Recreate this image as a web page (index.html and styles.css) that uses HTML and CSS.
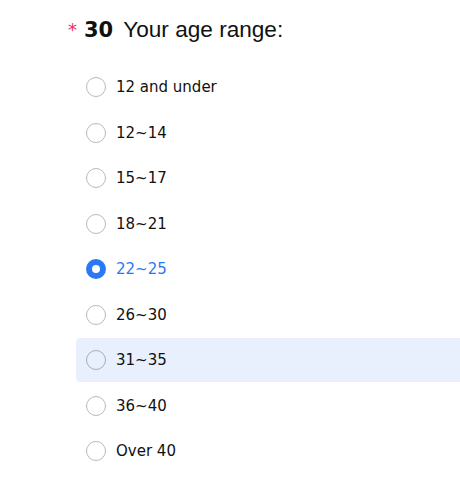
FILE: index.html
```html
<!DOCTYPE html>
<html>
<head>
<meta charset="utf-8">
<link rel="stylesheet" href="styles.css">
</head>
<body>
<div class="question">
  <div class="title">
    <span class="req">*</span>
    <span class="num">30</span>
    <span class="label">Your age range:</span>
  </div>
  <ul class="options">
    <li class="option"><span class="radio"></span><span class="text">12 and under</span></li>
    <li class="option"><span class="radio"></span><span class="text">12~14</span></li>
    <li class="option"><span class="radio"></span><span class="text">15~17</span></li>
    <li class="option"><span class="radio"></span><span class="text">18~21</span></li>
    <li class="option checked"><span class="radio"></span><span class="text">22~25</span></li>
    <li class="option"><span class="radio"></span><span class="text">26~30</span></li>
    <li class="option hover"><span class="radio"></span><span class="text">31~35</span></li>
    <li class="option"><span class="radio"></span><span class="text">36~40</span></li>
    <li class="option"><span class="radio"></span><span class="text">Over 40</span></li>
  </ul>
</div>
</body>
</html>
```

FILE: styles.css
```css
html, body {
  margin: 0;
  padding: 0;
  background: #ffffff;
}
body {
  overflow: hidden;
}
.question {
  padding-left: 76px;
  padding-top: 17px;
  width: 384px;
}
.title {
  display: flex;
  align-items: baseline;
  height: 48px;
  margin-left: -8px;
  color: #111;
}
.req {
  font-family: "DejaVu Sans", sans-serif;
  font-size: 18px;
  color: #e8325f;
  margin-right: 7px;
  position: relative;
  top: -1px;
}
.num {
  font-family: "DejaVu Sans", sans-serif;
  font-weight: bold;
  font-size: 21px;
  margin-right: 10px;
}
.label {
  font-family: "Liberation Sans", Arial, sans-serif;
  font-size: 22.6px;
}
.options {
  list-style: none;
  margin: 0;
  padding: 0;
}
.option {
  display: flex;
  align-items: center;
  height: 44px;
  margin-bottom: 1.5px;
  padding-left: 10px;
  border-radius: 4px 0 0 4px;
  font-family: "DejaVu Sans", sans-serif;
  font-size: 15px;
  color: #111;
}
.option.hover {
  background: #e8f0fd;
}
.radio {
  box-sizing: border-box;
  width: 20px;
  height: 20px;
  border-radius: 50%;
  border: 1px solid #b9b9b9;
  background: #fff;
  margin-right: 10px;
  flex: none;
}
.option.hover .radio {
  border-color: #a8adb6;
  background: transparent;
}
.option.checked .radio {
  border: 6px solid #2b78f6;
}
.option.checked .text {
  color: #2b78f6;
}
```
